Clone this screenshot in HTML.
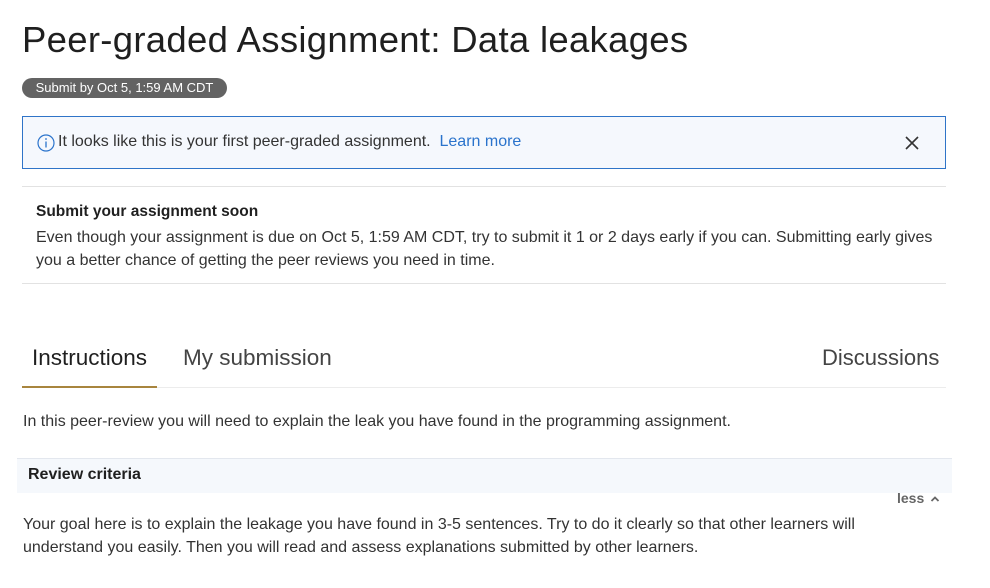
<!DOCTYPE html>
<html><head><meta charset="utf-8"><style>
body{margin:0;width:990px;height:588px;background:#fff;font-family:"Liberation Sans",sans-serif;color:#1f1f1f;position:relative;overflow:hidden}
.a{position:absolute;white-space:nowrap}
</style></head><body>
<div class="a" style="left:22px;top:19px;font-size:36.5px;color:#1f1f1f;letter-spacing:0.3px">Peer-graded Assignment: Data leakages</div>
<div class="a" style="left:22px;top:78px;width:205px;height:20px;border-radius:10px;background:#636363;color:#fff;font-size:13px;line-height:20px;text-align:center">Submit by Oct 5, 1:59 AM CDT</div>
<div class="a" style="left:22px;top:116px;width:922px;height:51px;border:1px solid #2f74c8;background:#f5f8fd"></div>
<svg class="a" style="left:37px;top:134px" width="18" height="18" viewBox="0 0 18 18"><circle cx="9" cy="9" r="8" fill="none" stroke="#2a73cc" stroke-width="1.2"/><line x1="9" y1="7.5" x2="9" y2="13.5" stroke="#2a73cc" stroke-width="1.3"/><circle cx="9" cy="5" r="0.9" fill="#2a73cc"/></svg>
<div class="a" style="left:58px;top:133px;font-size:16px;color:#333">It looks like this is your first peer-graded assignment.&nbsp; <span style="color:#2a73cc">Learn more</span></div>
<svg class="a" style="left:904px;top:135px" width="16" height="16" viewBox="0 0 16 16"><path d="M2 2L14 14M14 2L2 14" stroke="#333" stroke-width="1.6"/></svg>
<div class="a" style="left:22px;top:186px;width:924px;height:1px;background:#e2e2e2"></div>
<div class="a" style="left:36px;top:203px;font-size:15.5px;font-weight:bold;color:#1f1f1f">Submit your assignment soon</div>
<div class="a" style="left:36px;top:226px;font-size:16px;line-height:23px;color:#333">Even though your assignment is due on Oct 5, 1:59 AM CDT, try to submit it 1 or 2 days early if you can. Submitting early gives<br>you a better chance of getting the peer reviews you need in time.</div>
<div class="a" style="left:22px;top:283px;width:924px;height:1px;background:#e2e2e2"></div>
<div class="a" style="left:32px;top:345px;font-size:22.5px;color:#1f1f1f">Instructions</div>
<div class="a" style="left:183px;top:345px;font-size:22.5px;color:#444">My submission</div>
<div class="a" style="left:822px;top:345px;font-size:22px;color:#444">Discussions</div>
<div class="a" style="left:22px;top:387px;width:924px;height:1px;background:#ececec"></div>
<div class="a" style="left:22px;top:386px;width:135px;height:2px;background:#a8853e"></div>
<div class="a" style="left:23px;top:413px;font-size:16px;color:#333">In this peer-review you will need to explain the leak you have found in the programming assignment.</div>
<div class="a" style="left:17px;top:458px;width:935px;height:34px;background:#f5f8fc;border-top:1px solid #e3e7ee"></div>
<div class="a" style="left:28px;top:466px;font-size:16px;font-weight:bold;color:#1f1f1f">Review criteria</div>
<div class="a" style="left:897px;top:490px;font-size:14px;color:#666;font-weight:bold">less</div>
<svg class="a" style="left:930px;top:495px" width="10" height="8" viewBox="0 0 10 8"><path d="M1.5 6L5 2.5L8.5 6" fill="none" stroke="#666" stroke-width="1.8"/></svg>
<div class="a" style="left:23px;top:513px;font-size:16px;line-height:23px;color:#333">Your goal here is to explain the leakage you have found in 3-5 sentences. Try to do it clearly so that other learners will<br>understand you easily. Then you will read and assess explanations submitted by other learners.</div>
</body></html>
